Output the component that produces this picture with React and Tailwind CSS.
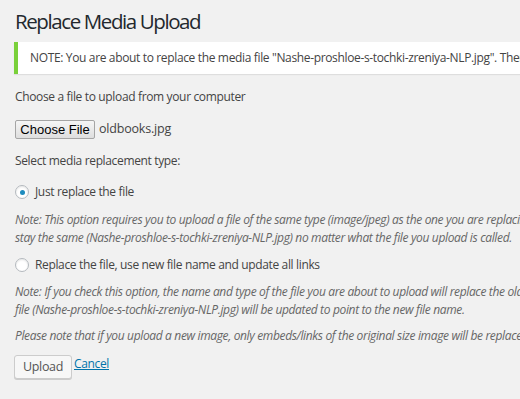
export default function App() {
  return (
    <div className="h-[399px] w-[520px] overflow-hidden bg-[#f1f1f1] font-['Open_Sans',sans-serif] text-[12px] tracking-[-0.35px] text-[#444]">
      <div className="pl-[15px] pt-[7px]">
        {/* Heading */}
        <h2 className="text-[20.5px] leading-[29px] font-normal tracking-[-1.4px] text-[#23282d]">Replace Media Upload</h2>

        {/* Notice */}
        <div className="-ml-px mt-[6px] flex h-[32px] w-[600px] items-center whitespace-nowrap border-l-4 border-[#7ad03a] bg-white pl-[12px] shadow-[0_1px_1px_rgba(0,0,0,0.08)]">
          NOTE: You are about to replace the media file "Nashe-proshloe-s-tochki-zreniya-NLP.jpg". There is no undo. Think about it!
        </div>

        <p className="mt-[14px] leading-[18px]">Choose a file to upload from your computer</p>

        {/* File input */}
        <div className="mt-[13px] flex h-[20px] items-center gap-[4px]">
          <button className="h-[19px] w-[80px] rounded-[2px] border border-[#a5a5a5] bg-gradient-to-b from-[#f6f6f6] to-[#dedede] font-['Liberation_Sans',sans-serif] text-[13px] leading-none tracking-normal text-black">
            Choose File
          </button>
          <span className="text-[12.5px] tracking-[-0.2px]">oldbooks.jpg</span>
        </div>

        <p className="mt-[13px] leading-[18px]">Select media replacement type:</p>

        {/* Option 1 */}
        <label className="mt-[13px] flex h-[18px] items-center gap-[6px]">
          <span className="flex h-[14px] w-[14px] items-center justify-center rounded-full border border-[#b4b9be] bg-white shadow-[inset_0_1px_2px_rgba(0,0,0,0.1)]">
            <span className="h-[5px] w-[5px] rounded-full bg-[#1e8cbe]" />
          </span>
          <span>Just replace the file</span>
        </label>
        <p className="mt-[10px] whitespace-nowrap leading-[18px] italic text-[#666]">
          Note: This option requires you to upload a file of the same type (image/jpeg) as the one you are replacing. The name of the attachment will
          <br />
          stay the same (Nashe-proshloe-s-tochki-zreniya-NLP.jpg) no matter what the file you upload is called.
        </p>

        {/* Option 2 */}
        <label className="mt-[9px] flex h-[18px] items-center gap-[6px]">
          <span className="h-[14px] w-[14px] rounded-full border border-[#b4b9be] bg-white shadow-[inset_0_1px_2px_rgba(0,0,0,0.1)]" />
          <span>Replace the file, use new file name and update all links</span>
        </label>
        <p className="mt-[9px] whitespace-nowrap leading-[18px] italic text-[#666]">
          Note: If you check this option, the name and type of the file you are about to upload will replace the old file. All links pointing to the current
          <br />
          file (Nashe-proshloe-s-tochki-zreniya-NLP.jpg) will be updated to point to the new file name.
        </p>

        <p className="mt-[8px] whitespace-nowrap leading-[18px] italic text-[#666]">
          Please note that if you upload a new image, only embeds/links of the original size image will be replaced in your posts.
        </p>

        {/* Actions */}
        <div className="mt-[10px] flex items-start">
          <button className="-ml-px h-[24px] w-[58px] rounded-[3px] border border-[#ccc] bg-[#f7f7f7] text-[12.5px] leading-[22px] text-[#555] shadow-[0_1px_0_#ccc]">
            Upload
          </button>
          <a href="#" className="ml-[2px] leading-[18px] text-[#0073aa] underline">
            Cancel
          </a>
        </div>
      </div>
    </div>
  );
}
